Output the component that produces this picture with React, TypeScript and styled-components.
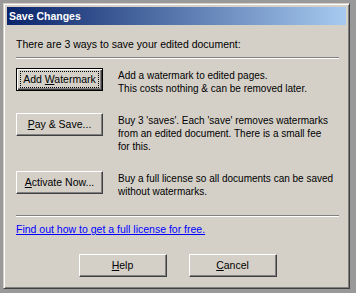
import styled, { createGlobalStyle } from 'styled-components';

const FACE = '#d4d0c8';

const GlobalStyle = createGlobalStyle`
  html, body {
    margin: 0;
    padding: 0;
    background: #999999;
  }
  body {
    font-family: 'Liberation Sans', Arial, sans-serif;
    font-size: 10.5px;
  }
`;

interface OptionProps {
  label: string;
  accel: string;
  rest: string;
  isDefault?: boolean;
  lines: string[];
}

const options: OptionProps[] = [
  {
    label: 'Add ',
    accel: 'W',
    rest: 'atermark',
    isDefault: true,
    lines: ['Add a watermark to edited pages.', 'This costs nothing & can be removed later.'],
  },
  {
    label: '',
    accel: 'P',
    rest: 'ay & Save...',
    lines: [
      "Buy 3 'saves'. Each 'save' removes watermarks",
      'from an edited document. There is a small fee',
      'for this.',
    ],
  },
  {
    label: '',
    accel: 'A',
    rest: 'ctivate Now...',
    lines: ['Buy a full license so all documents can be saved', 'without watermarks.'],
  },
];

export default function App() {
  return (
    <>
      <GlobalStyle />
      <Screen>
        <Dialog>
          <TitleBar>Save Changes</TitleBar>
          <Body>
            <Intro>There are 3 ways to save your edited document:</Intro>
            <Separator />
            <Options>
              {options.map(opt => (
                <OptionRow key={opt.rest}>
                  <Button $width={87} $isDefault={opt.isDefault}>
                    <Focus $on={opt.isDefault}>
                      {opt.label}
                      <u>{opt.accel}</u>
                      {opt.rest}
                    </Focus>
                  </Button>
                  <Desc>
                    {opt.lines.map(l => (
                      <div key={l}>{l}</div>
                    ))}
                  </Desc>
                </OptionRow>
              ))}
            </Options>
            <Separator />
            <Link href="#">Find out how to get a full license for free.</Link>
            <Footer>
              <Button $width={88}>
                <u>H</u>elp
              </Button>
              <Button $width={88}>
                <u>C</u>ancel
              </Button>
            </Footer>
          </Body>
        </Dialog>
      </Screen>
    </>
  );
}

const Screen = styled.div`
  width: 356px;
  height: 293px;
  padding: 3px 6px 4px 3px;
  box-sizing: border-box;
`;

const Dialog = styled.div`
  width: 347px;
  height: 286px;
  box-sizing: border-box;
  background: ${FACE};
  border: 1px solid;
  border-color: ${FACE} #404040 #404040 ${FACE};
  box-shadow: inset 1px 1px 0 #ffffff, inset -1px -1px 0 #808080;
  padding: 3px;
  display: flex;
  flex-direction: column;
  overflow: hidden;
`;

const TitleBar = styled.div`
  height: 18px;
  line-height: 18px;
  padding-left: 2px;
  color: #ffffff;
  font-weight: bold;
  font-size: 10.5px;
  background: linear-gradient(to right, #0a246a, #a6caf0);
`;

const Body = styled.div`
  display: flex;
  flex-direction: column;
  padding: 13px 7px 0 9px;
  line-height: 13px;
  color: #000000;
  white-space: nowrap;
`;

const Intro = styled.div`
  margin-bottom: 6px;
`;

const Separator = styled.div`
  border-top: 1px solid #808080;
  border-bottom: 1px solid #ffffff;
  height: 0;
`;

const Options = styled.div`
  display: flex;
  flex-direction: column;
  gap: 18px;
  padding: 9px 0 17px;
`;

const OptionRow = styled.div`
  display: flex;
  align-items: flex-start;
  gap: 15px;
`;

const Button = styled.div<{ $width: number; $isDefault?: boolean }>`
  width: ${p => p.$width}px;
  height: 23px;
  box-sizing: border-box;
  display: flex;
  align-items: center;
  justify-content: center;
  flex-shrink: 0;
  background: ${FACE};
  border: 1px solid;
  border-color: #ffffff #404040 #404040 #ffffff;
  box-shadow: inset -1px -1px 0 #808080;
  ${p =>
    p.$isDefault &&
    `
    border: 1px solid #000000;
    box-shadow: inset 1px 1px 0 #ffffff, inset -1px -1px 0 #404040, inset -2px -2px 0 #808080;
  `}
`;

const Focus = styled.span<{ $on?: boolean }>`
  padding: 1px 2px;
  ${p => p.$on && `outline: 1px dotted #000000; outline-offset: 0;`}
`;

const Desc = styled.div`
  padding-top: 1px;
  font-size: 10px;
`;

const Link = styled.a`
  margin-top: 6px;
  color: #0000ff;
  text-decoration: underline;
  align-self: flex-start;
`;

const Footer = styled.div`
  display: flex;
  justify-content: center;
  gap: 22px;
  margin-top: 18px;
`;
